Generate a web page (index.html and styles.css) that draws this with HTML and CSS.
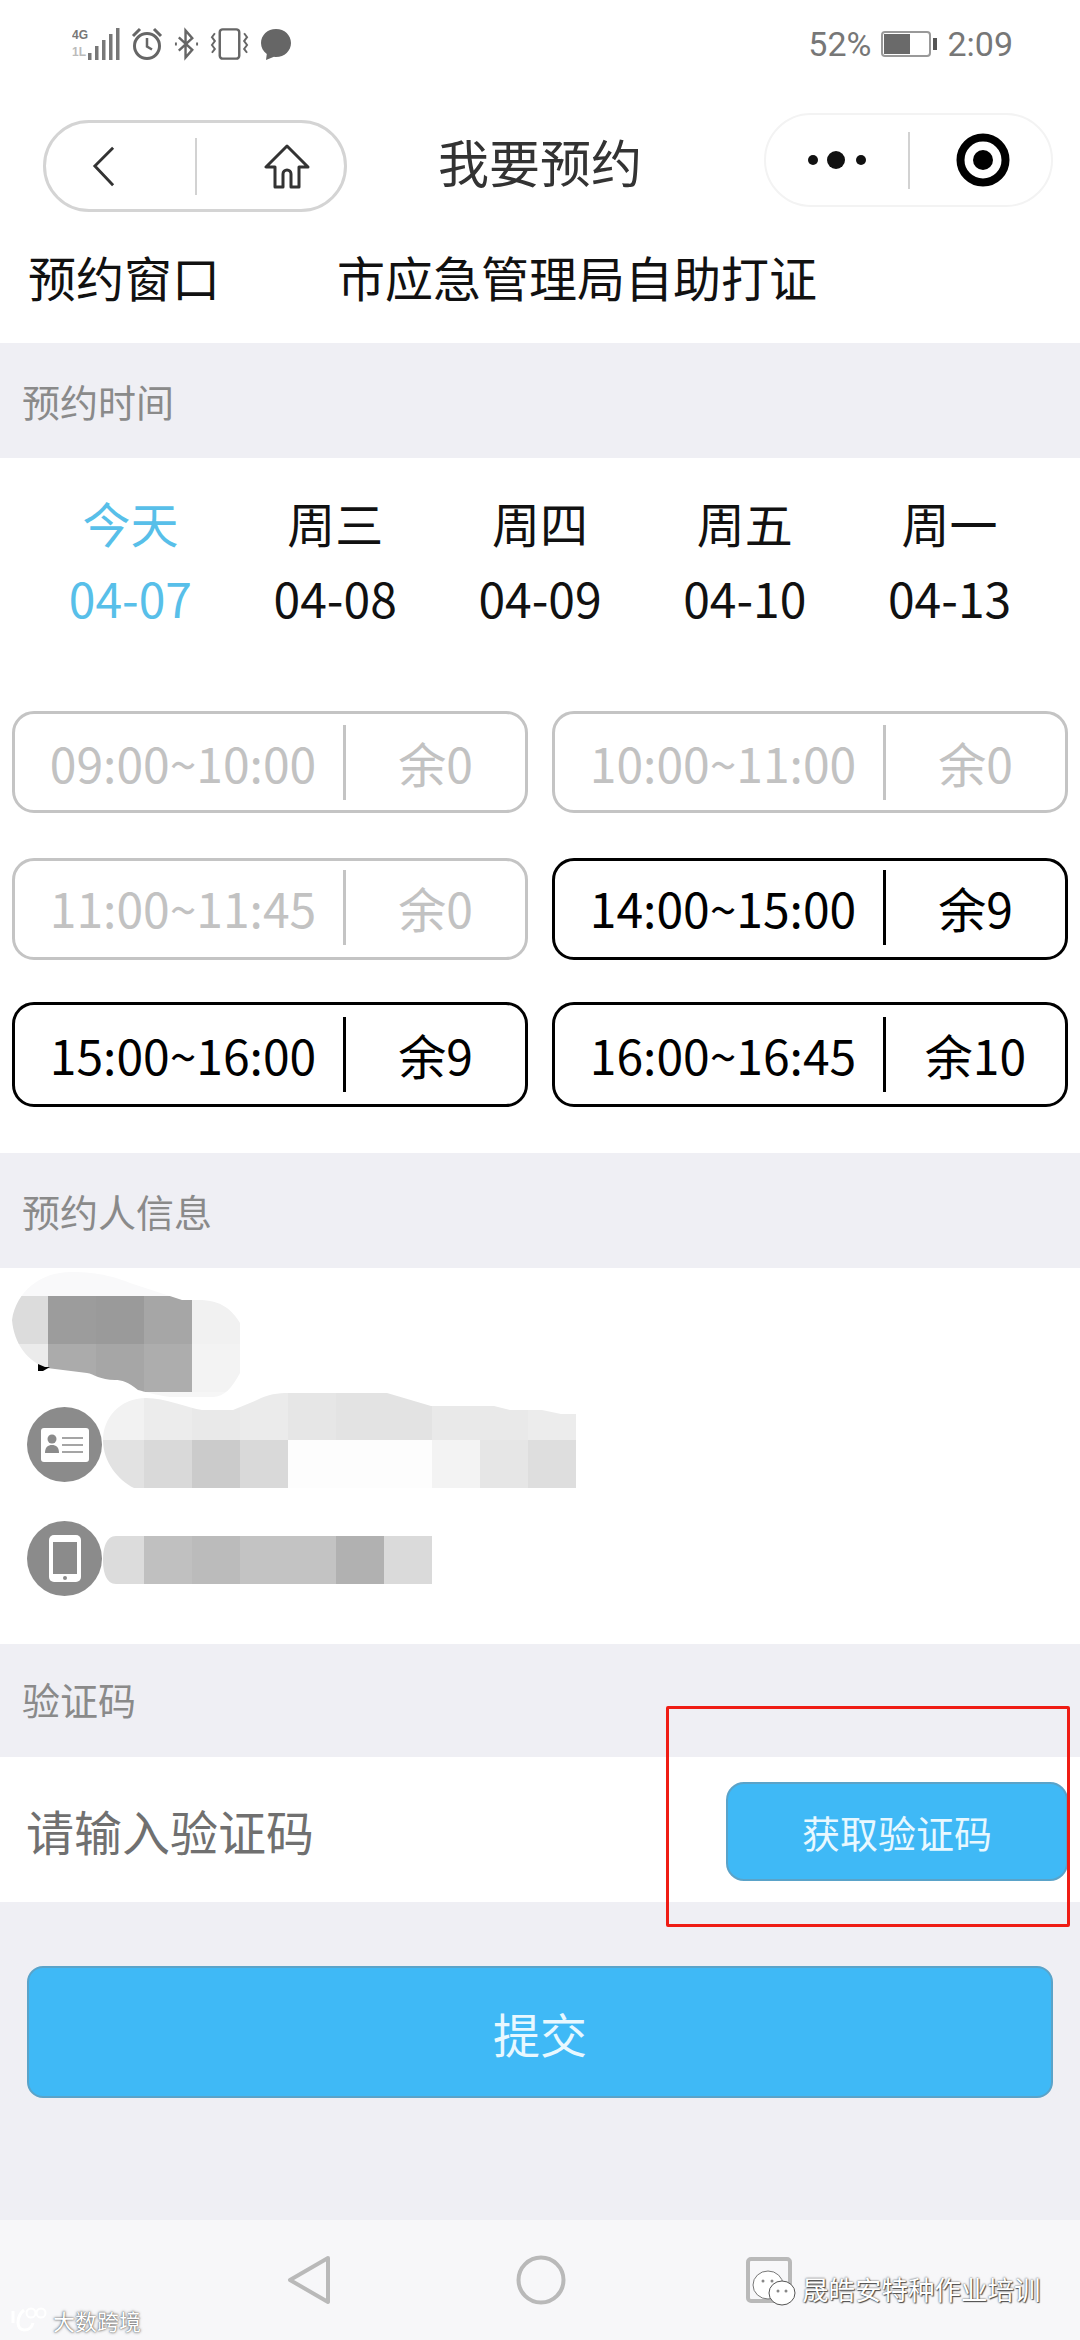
FILE: index.html
```html
<!DOCTYPE html>
<html lang="zh-CN">
<head>
<meta charset="utf-8">
<title>我要预约</title>
<link rel="stylesheet" href="styles.css">
</head>
<body>
<div class="page">
  <div class="status">
    <div class="status-left">
      <svg class="ic-signal" width="48" height="34" viewBox="0 0 48 34">
        <text x="0" y="12" class="tiny">4G</text>
        <text x="0" y="29" class="tiny faint">1L</text>
        <rect x="16" y="26" width="3.500" height="7" fill="#777"/>
        <rect x="23" y="19" width="3.500" height="14" fill="#777"/>
        <rect x="30" y="13" width="3.500" height="20" fill="#777"/>
        <rect x="37" y="7" width="3.500" height="26" fill="#777"/>
        <rect x="44" y="1" width="3.500" height="32" fill="#777"/>
      </svg>
      <svg class="ic-alarm" width="32" height="34" viewBox="0 0 32 34" fill="none" stroke="#666" stroke-width="3">
        <circle cx="16" cy="19" r="12.500"/>
        <path d="M16 11v8.500l5 3" stroke-width="2.500"/>
        <path d="M2 9 9 2M30 9l-7-7" stroke-width="3"/>
      </svg>
      <svg class="ic-bt" width="25" height="34" viewBox="0 0 26 34" fill="none" stroke="#666" stroke-width="2.500">
        <path d="M5 10 19 23l-7 8V3l7 8L5 24"/>
        <path d="M1 17h2M23 17h2" stroke-width="3"/>
      </svg>
      <svg class="ic-vib" width="39" height="34" viewBox="0 0 40 34" fill="none" stroke="#666" stroke-width="2.500">
        <rect x="10" y="2" width="20" height="30" rx="3"/>
        <path d="M5 6 2 10l3 4-3 4 3 4-3 4M35 6l3 4-3 4 3 4-3 4 3 4" stroke-width="2"/>
      </svg>
      <svg class="ic-msg" width="32" height="34" viewBox="0 0 32 34">
        <path d="M16 2C7.500 2 1 8.200 1 16c0 4.500 2.200 8.400 5.800 11L6 33l8-3.200c.7.100 1.300.2 2 .2 8.500 0 15-6.200 15-14S24.500 2 16 2z" fill="#666"/>
      </svg>
    </div>
    <div class="status-right">
      <span>52%</span>
      <svg width="56" height="26" viewBox="0 0 56 26">
        <rect x="1" y="1" width="48" height="24" rx="3" fill="#fff" stroke="#999" stroke-width="2"/>
        <rect x="3" y="3" width="26" height="20" fill="#6a6a6a"/>
        <rect x="52" y="7" width="4" height="12" fill="#555"/>
      </svg>
      <span>2:09</span>
    </div>
  </div>

  <div class="nav">
    <div class="capsule capsule-left">
      <span class="cap-cell">
        <svg width="23" height="41" viewBox="0 0 24 41" fill="none" stroke="#333" stroke-width="3"><path d="M22 1 3 20l19 20"/></svg>
      </span>
      <span class="cap-line"></span>
      <span class="cap-cell">
        <svg width="46" height="45" viewBox="0 0 46 45" fill="none" stroke="#333" stroke-width="3" stroke-linejoin="round"><path d="M23 2 2 23h9v20h8V30a4 4 0 0 1 8 0v13h8V23h9z"/></svg>
      </span>
    </div>
    <div class="nav-title">我要预约</div>
    <div class="capsule capsule-right">
      <span class="cap-cell">
        <svg width="58" height="20" viewBox="0 0 58 20" fill="#111"><circle cx="5" cy="10" r="5"/><circle cx="28" cy="10" r="9"/><circle cx="53" cy="10" r="5"/></svg>
      </span>
      <span class="cap-line"></span>
      <span class="cap-cell cap-target">
        <svg width="54" height="54" viewBox="0 0 54 54"><circle cx="27" cy="27" r="22.500" fill="none" stroke="#000" stroke-width="8"/><circle cx="27" cy="27" r="10" fill="#000"/></svg>
      </span>
    </div>
  </div>

  <div class="window-row">
    <span class="window-label">预约窗口</span>
    <span class="window-value">市应急管理局自助打证</span>
  </div>

  <div class="band">预约时间</div>

  <section class="schedule">
    <div class="days">
      <div class="day active"><span>今天</span><span>04-07</span></div>
      <div class="day"><span>周三</span><span>04-08</span></div>
      <div class="day"><span>周四</span><span>04-09</span></div>
      <div class="day"><span>周五</span><span>04-10</span></div>
      <div class="day"><span>周一</span><span>04-13</span></div>
    </div>
    <div class="slots">
      <div class="slot off"><span class="slot-time">09:00~10:00</span><span class="slot-left">余0</span></div>
      <div class="slot off"><span class="slot-time">10:00~11:00</span><span class="slot-left">余0</span></div>
      <div class="slot off mid"><span class="slot-time">11:00~11:45</span><span class="slot-left">余0</span></div>
      <div class="slot mid"><span class="slot-time">14:00~15:00</span><span class="slot-left">余9</span></div>
      <div class="slot last"><span class="slot-time">15:00~16:00</span><span class="slot-left">余9</span></div>
      <div class="slot last"><span class="slot-time">16:00~16:45</span><span class="slot-left">余10</span></div>
    </div>
  </section>

  <div class="band">预约人信息</div>

  <section class="info">
    <div class="info-icon-row"><span class="info-icon-blank"></span></div>
    <div class="info-icon-row">
      <svg width="75" height="75" viewBox="0 0 75 75">
        <circle cx="37.500" cy="37.500" r="37.500" fill="#8b8b8b"/>
        <rect x="14" y="21" width="48" height="34" rx="3" fill="#fff"/>
        <circle cx="25" cy="32" r="4.500" fill="#8b8b8b"/>
        <path d="M18 46c0-6 3-8 7-8s7 2 7 8z" fill="#8b8b8b"/>
        <path d="M35 31h21M35 38h21M35 45h21" stroke="#a5a5a5" stroke-width="2"/>
      </svg>
    </div>
    <div class="info-icon-row">
      <svg width="75" height="75" viewBox="0 0 75 75">
        <circle cx="37.500" cy="37.500" r="37.500" fill="#8b8b8b"/>
        <rect x="22" y="14" width="32" height="47" rx="5" fill="#fff"/>
        <rect x="26" y="21" width="24" height="32" fill="#8b8b8b"/>
        <circle cx="38" cy="57" r="2" fill="#8b8b8b"/>
      </svg>
    </div>
    <svg class="mosaic" width="600" height="376" viewBox="0 1268 600 376">
      <defs>
        <clipPath id="m1"><path d="M12 1320C16 1292 40 1272 71 1272 100 1272 118 1278 130 1283L182 1300H198C222 1300 232 1310 240 1323V1373C232 1388 224 1397 213 1397H170C155 1395 146 1392 138 1390 128 1382 122 1380 115 1380 100 1380 94 1374 87 1373L47 1368C28 1362 14 1344 12 1320Z"/></clipPath>
        <clipPath id="m2"><path d="M103 1440C103 1418 120 1398 146 1398 165 1398 188 1408 202 1410H233L257 1400C268 1394 278 1393 289 1393H387L431 1406H494L510 1410H542L561 1414H576V1488H134C118 1480 103 1462 103 1440Z"/></clipPath>
        <clipPath id="m3"><path d="M103 1560C103 1548 106 1536 116 1536H432V1584H116C106 1584 103 1572 103 1560Z"/></clipPath>
      </defs>
      <g clip-path="url(#m1)" shape-rendering="crispEdges">
        <rect x="0" y="1248" width="240" height="48" fill="#f9f9fa"/>
        <rect x="0" y="1296" width="48" height="48" fill="#dcdcdc"/>
        <rect x="48" y="1296" width="48" height="48" fill="#9c9c9c"/>
        <rect x="96" y="1296" width="48" height="48" fill="#9a9a9a"/>
        <rect x="144" y="1296" width="48" height="48" fill="#a6a6a6"/>
        <rect x="192" y="1296" width="48" height="48" fill="#f1f1f1"/>
        <rect x="0" y="1344" width="48" height="48" fill="#ebebeb"/>
        <rect x="48" y="1344" width="48" height="48" fill="#ababab"/>
        <rect x="96" y="1344" width="48" height="48" fill="#a6a6a6"/>
        <rect x="144" y="1344" width="48" height="48" fill="#adadad"/>
        <rect x="192" y="1344" width="48" height="48" fill="#f3f3f3"/>
        <rect x="0" y="1392" width="240" height="8" fill="#f6f6f6"/>
      </g>
      <path d="M38 1364l7 3 5 0-7 4-5 0z" fill="#000"/>
      <g clip-path="url(#m2)" shape-rendering="crispEdges">
        <rect x="96" y="1392" width="48" height="48" fill="#f2f2f2"/>
        <rect x="144" y="1392" width="48" height="48" fill="#ececec"/>
        <rect x="192" y="1392" width="48" height="48" fill="#e9e9e9"/>
        <rect x="240" y="1392" width="48" height="48" fill="#ebebeb"/>
        <rect x="288" y="1392" width="48" height="48" fill="#e6e6e6"/>
        <rect x="336" y="1392" width="48" height="48" fill="#e3e3e3"/>
        <rect x="384" y="1392" width="48" height="48" fill="#e3e3e3"/>
        <rect x="432" y="1392" width="48" height="48" fill="#e9e9e9"/>
        <rect x="480" y="1392" width="48" height="48" fill="#e9e9e9"/>
        <rect x="528" y="1392" width="48" height="48" fill="#ececec"/>
        <rect x="96" y="1440" width="48" height="48" fill="#e2e2e2"/>
        <rect x="144" y="1440" width="48" height="48" fill="#d9d9d9"/>
        <rect x="192" y="1440" width="48" height="48" fill="#cbcbcb"/>
        <rect x="240" y="1440" width="48" height="48" fill="#d9d9d9"/>
        <rect x="288" y="1440" width="144" height="48" fill="#fdfdfd"/>
        <rect x="432" y="1440" width="48" height="48" fill="#f3f3f3"/>
        <rect x="480" y="1440" width="48" height="48" fill="#e6e6e6"/>
        <rect x="528" y="1440" width="48" height="48" fill="#dedede"/>
      </g>
      <g clip-path="url(#m3)" shape-rendering="crispEdges">
        <rect x="96" y="1536" width="48" height="48" fill="#dcdcdc"/>
        <rect x="144" y="1536" width="48" height="48" fill="#c0c0c0"/>
        <rect x="192" y="1536" width="48" height="48" fill="#bbbbbb"/>
        <rect x="240" y="1536" width="96" height="48" fill="#c3c3c3"/>
        <rect x="336" y="1536" width="48" height="48" fill="#b1b1b1"/>
        <rect x="384" y="1536" width="48" height="48" fill="#dadada"/>
      </g>
    </svg>
  </section>

  <div class="band band-code">验证码</div>

  <div class="code-row">
    <span class="code-hint">请输入验证码</span>
    <span class="code-btn">获取验证码</span>
  </div>

  <div class="submit-wrap"><div class="submit">提交</div></div>

  <div class="sysnav">
    <svg width="44" height="50" viewBox="0 0 44 50" fill="none" stroke="#b9b9b9" stroke-width="4" stroke-linejoin="round"><path d="M41 3 3 25l38 22z"/></svg>
    <svg width="50" height="50" viewBox="0 0 50 50" fill="none" stroke="#b9b9b9" stroke-width="4"><circle cx="25" cy="25" r="22.500"/></svg>
    <svg class="sys-square" width="46" height="46" viewBox="0 0 46 46" fill="none" stroke="#b9b9b9" stroke-width="4"><rect x="2" y="2" width="42" height="42" rx="3"/></svg>
  </div>

  <div class="annot"></div>

  <div class="mark-wechat">
    <svg width="44" height="38" viewBox="0 0 44 38">
      <ellipse cx="16" cy="15" rx="15" ry="14" fill="#fff" stroke="#777" stroke-width="1"/>
      <ellipse cx="30" cy="23" rx="13" ry="12" fill="#fff" stroke="#555" stroke-width="1"/>
      <circle cx="11" cy="11" r="1.500" fill="#888"/><circle cx="20" cy="11" r="1.500" fill="#888"/>
      <circle cx="26" cy="21" r="1.500" fill="#888"/><circle cx="34" cy="21" r="1.500" fill="#888"/>
    </svg>
    <span>晟皓安特种作业培训</span>
  </div>

  <div class="mark-brand">
    <svg width="40" height="26" viewBox="0 0 40 26" fill="none" stroke="#fff" stroke-width="3">
      <path d="M3 4v12M14 3C6 10 6 22 14 23c5 0 8-3 9-7"/><circle cx="21" cy="6" r="4.500" stroke-width="2"/><circle cx="31" cy="6" r="4.500" stroke-width="2"/>
    </svg>
    <span>大数跨境</span>
  </div>
</div>
</body>
</html>
```
FILE: styles.css
```css
* { box-sizing: border-box; }
html, body { margin: 0; padding: 0; }
body { font-family: "Noto Sans CJK SC", "Noto Sans", sans-serif; color: #111; background: #efeff4; }
.page { position: relative; width: 1080px; height: 2340px; overflow: hidden; background: #efeff4; display: flex; flex-direction: column; }

.status { height: 88px; background: #fff; display: flex; align-items: center; justify-content: space-between; padding: 0 67px 0 72px; flex: none; }
.status-left { display: flex; align-items: center; gap: 11px; }
.status-left svg { display: block; }
.tiny { font-size: 12px; font-weight: 700; fill: #777; font-family: "Liberation Sans", sans-serif; }
.faint { fill: #bbb; }
.status-right { display: flex; align-items: center; gap: 10px; font-family: "Roboto", sans-serif; font-size: 34px; color: #777; line-height: 1; }

.nav { height: 144px; background: #fff; position: relative; display: flex; justify-content: space-between; padding: 0 27px 0 43px; flex: none; }
.capsule { display: flex; align-items: center; background: #fff; border-radius: 48px; }
.capsule-left { width: 304px; height: 92px; margin-top: 32px; border: 3px solid #d4d4d4; }
.capsule-right { width: 289px; height: 94px; margin-top: 25px; border: 2px solid #f3f3f3; }
.cap-cell { flex: 1; display: flex; align-items: center; justify-content: center; }
.capsule-left .cap-cell:first-child { padding-right: 35px; }
.capsule-left .cap-cell:last-child { padding-left: 33px; }
.capsule-right .cap-target svg { margin-left: 5px; }
.cap-line { width: 2px; height: 57px; background: #d2d2d2; flex: none; }
.nav-title { position: absolute; left: 0; right: 0; top: 41px; text-align: center; font-size: 51px; line-height: 64px; color: #333; pointer-events: none; }

.window-row { height: 111px; background: #fff; display: flex; align-items: flex-start; padding: 10px 0 0 28px; font-size: 48px; line-height: 68px; color: #111; flex: none; }
.window-label { width: 309px; }

.band { height: 115px; background: #efeff4; color: #8a8a8a; font-size: 38px; line-height: 115px; padding-left: 22px; flex: none; }
.band-code { height: 113px; line-height: 110px; }

.schedule { height: 695px; background: #fff; padding-top: 27px; flex: none; }
.days { display: flex; padding: 0 28px; }
.day { flex: 1; display: flex; flex-direction: column; align-items: center; font-size: 48px; line-height: 75px; color: #111; }
.day.active { color: #58bfe9; }
.slots { display: grid; grid-template-columns: 516px 516px; gap: 45px 24px; padding: 0 12px; margin-top: 76px; }
.slot { height: 102px; border: 3px solid #000; border-radius: 22px; display: flex; align-items: center; color: #000; font-size: 48px; }
.slot-time { width: 331px; padding-left: 8px; text-align: center; border-right: 3px solid #000; line-height: 75px; flex: none; }
.slot-left { flex: 1; text-align: center; line-height: 75px; }
.slot.off { border-color: #c4c4c4; color: #c2c2c2; }
.slot.off .slot-time { border-right-color: #c4c4c4; }
.slot.mid { padding-bottom: 4px; }
.slot.last { height: 105px; margin-top: -3px; }

.info { height: 376px; background: #fff; position: relative; padding: 25px 0 0 27px; display: flex; flex-direction: column; gap: 39px; flex: none; }
.info-icon-row { height: 75px; }
.info-icon-row svg { display: block; }
.info-icon-blank { display: block; width: 75px; height: 75px; }
.mosaic { position: absolute; left: 0; top: 0; }

.code-row { height: 145px; background: #fff; display: flex; align-items: center; justify-content: space-between; padding: 0 12px 0 26px; flex: none; }
.code-hint { font-size: 48px; line-height: 68px; color: #707070; }
.code-btn { width: 342px; height: 99px; margin-top: 4px; background: #3fb9f6; border: 2px solid #5aa3c9; border-radius: 18px; color: #e8f8ff; font-size: 38px; display: flex; align-items: center; justify-content: center; }

.submit-wrap { padding: 64px 27px 0; flex: none; }
.submit { height: 132px; background: #3fb9f6; border: 2px solid #5aa3c9; border-radius: 16px; color: #e8f8ff; font-size: 47px; display: flex; align-items: center; justify-content: center; }

.sysnav { margin-top: auto; height: 120px; background: #f7f7f9; display: flex; align-items: flex-start; padding: 35px 0 0 287px; gap: 185px; flex: none; }
.sysnav svg { display: block; }
.sysnav .sys-square { margin-left: -5px; margin-top: 2px; }

.annot { position: absolute; left: 666px; top: 1706px; width: 404px; height: 221px; border: 3px solid #ef1c14; border-radius: 2px; }

.mark-wechat { position: absolute; left: 752px; top: 2270px; display: flex; align-items: center; gap: 6px; color: #fff; font-size: 26.500px; line-height: 38px; text-shadow: 0 0 2px #333, 1px 1px 1px #555; white-space: nowrap; }
.mark-brand { position: absolute; left: 10px; top: 2306px; display: flex; align-items: center; gap: 3px; color: #fff; font-size: 22px; line-height: 28px; text-shadow: 0 0 3px #555, 0 0 1px #555; white-space: nowrap; }
```
